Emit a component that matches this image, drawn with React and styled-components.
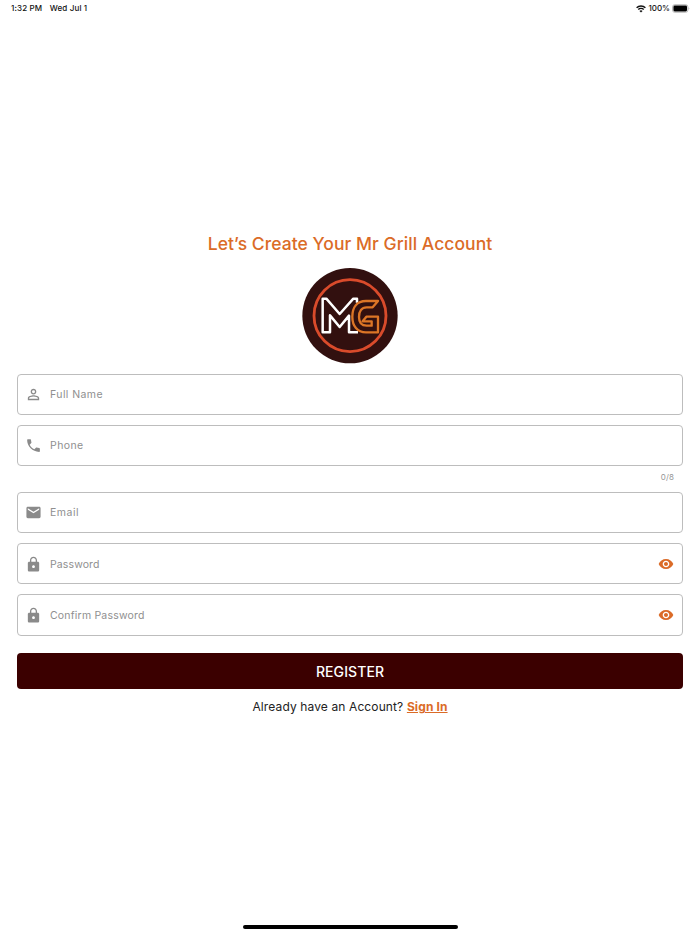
import React from 'react'
import styled, { createGlobalStyle } from 'styled-components'
import {
  MdPersonOutline,
  MdPhone,
  MdEmail,
  MdLock,
  MdVisibility,
} from 'react-icons/md'


const GlobalStyle = createGlobalStyle`
  * {
    box-sizing: border-box;
  }
  body {
    margin: 0;
    background: #fff;
    font-family: Inter, "Liberation Sans", sans-serif;
  }
`

const Screen = styled.div`
  display: flex;
  flex-direction: column;
  height: 934px;
  width: 700px;
  overflow: hidden;
`

const StatusBar = styled.header`
  display: flex;
  justify-content: space-between;
  height: 18px;
  padding: 0 10px 0 11px;
  font-size: 8px;
  font-weight: 500;
  line-height: 17px;
  color: #111;
`

const StatusGroup = styled.div`
  display: flex;
  align-items: center;
  height: 17px;
  gap: ${({ $gap }) => $gap}px;
  letter-spacing: ${({ $spacing }) => $spacing || 0}px;
`

const Content = styled.main`
  display: flex;
  flex: 1;
  flex-direction: column;
  align-items: center;
  padding: 214px 17px 0;
`

const Title = styled.h1`
  margin: 0;
  height: 24px;
  font-size: 17.5px;
  font-weight: 500;
  line-height: 24px;
  letter-spacing: 0.05px;
  white-space: nowrap;
  color: #db6b27;
`

const Logo = styled.svg`
  display: block;
  width: 96px;
  height: 96px;
  margin: 11.5px 0 10px;
`

const Form = styled.form`
  display: flex;
  flex-direction: column;
  width: 100%;
`

const Field = styled.label`
  display: flex;
  align-items: center;
  height: 41.3px;
  margin-bottom: ${({ $last }) => ($last ? 17.3 : 10)}px;
  padding: 1px 8px 0 7px;
  border: 1px solid #bdbdbd;
  border-radius: 4px;
  color: #8a8a8a;
`

const Input = styled.input`
  flex: 1;
  min-width: 0;
  margin-left: 8px;
  padding: 0;
  border: 0;
  outline: 0;
  background: transparent;
  font-family: inherit;
  font-size: 10.5px;
  letter-spacing: ${({ $spacing }) => $spacing}px;

  &::placeholder {
    color: #8f8f8f;
    opacity: 1;
  }
`

const Toggle = styled.span`
  display: flex;
  color: #db6b27;
`

const Counter = styled.div`
  height: 15.6px;
  padding-right: 9px;
  margin-top: -5px;
  margin-bottom: 5px;
  font-size: 8px;
  line-height: 12px;
  letter-spacing: 0.1px;
  text-align: right;
  color: #969696;
`

const RegisterButton = styled.button`
  height: 36.5px;
  padding: 0;
  border: 0;
  border-radius: 4px;
  background: #3b0000;
  font-family: inherit;
  font-size: 14px;
  font-weight: 500;
  letter-spacing: 0.08px;
  color: #fff;
`

const SignIn = styled.p`
  margin: 9px 0 0;
  font-size: 12px;
  line-height: 18px;
  letter-spacing: 0.12px;
  text-align: center;
  color: #222;

  a {
    color: #db6b27;
    font-weight: 700;
    text-decoration: underline;
  }
`

const HomeIndicator = styled.div`
  align-self: center;
  width: 215px;
  height: 4px;
  margin-bottom: 5.5px;
  border-radius: 2px;
  background: #000;
`

const WifiIcon = () => (
  <svg width="10" height="8" viewBox="0 0 20 16" fill="none" stroke="#111" strokeWidth="2.7">
    <path d="M1.2 5.6C6 .8 14 .8 18.8 5.6" />
    <path d="M4.5 9.1C7.5 6.2 12.5 6.2 15.5 9.1" />
    <path d="M10 15 6.9 11.8Q10 9.4 13.1 11.8Z" fill="#111" stroke="none" />
  </svg>
)

const BatteryIcon = () => (
  <svg width="18" height="9" viewBox="0 0 18 9">
    <rect x=".5" y=".7" width="15.4" height="7.6" rx="2.2" fill="#fff" stroke="#aaa" strokeWidth=".8" />
    <rect x="1.4" y="1.6" width="13.6" height="5.8" rx="1.3" fill="#000" />
    <path d="M16.7 3.2Q18 4.5 16.7 5.8Z" fill="#999" />
  </svg>
)

const GrillLogo = () => (
  <Logo viewBox="0 0 288 288" fill="none" strokeLinejoin="round">
    <circle cx="144" cy="143" r="143" fill="#32100f" />
    <circle cx="144" cy="143" r="108" stroke="#d94b2b" strokeWidth="8.5" />
    <path
      d="M165 104V92H154L113 138L73 92H62V193H84V142L113 177L141 143V193H168"
      stroke="#fff"
      strokeWidth="7.5"
    />
    <path
      d="M228 99H192C164 99 151 119 151 146C151 174 166 193 192 193H228V146H193L182 160H209V173H194C179 173 171 164 171 147C171 130 179 118 194 118H212Z"
      fill="#32100f"
      stroke="#dc7526"
      strokeWidth="7"
    />
  </Logo>
)

const TextField = ({ icon: Icon, label, spacing, secret, last }) => (
  <Field $last={last}>
    <Icon size={17} />
    <Input
      type={secret ? 'password' : 'text'}
      placeholder={label}
      $spacing={spacing}
    />
    {secret && <Toggle><MdVisibility size={16} /></Toggle>}
  </Field>
)

const App = () => (
  <Screen>
    <GlobalStyle />
    <StatusBar>
      <StatusGroup $gap={7.5} $spacing={0.14}>
        <span>1:32 PM</span>
        <span>Wed Jul 1</span>
      </StatusGroup>
      <StatusGroup $gap={2}>
        <WifiIcon />
        <span>100%</span>
        <BatteryIcon />
      </StatusGroup>
    </StatusBar>
    <Content>
      <Title>Let’s Create Your Mr Grill Account</Title>
      <GrillLogo />
      <Form>
        <TextField icon={MdPersonOutline} label="Full Name" spacing={0.42} />
        <TextField icon={MdPhone} label="Phone" spacing={0.42} />
        <Counter>0/8</Counter>
        <TextField icon={MdEmail} label="Email" spacing={0.5} />
        <TextField icon={MdLock} label="Password" spacing={0.12} secret />
        <TextField icon={MdLock} label="Confirm Password" spacing={0.2} secret last />
        <RegisterButton type="button">REGISTER</RegisterButton>
      </Form>
      <SignIn>
        Already have an Account? <a>Sign In</a>
      </SignIn>
    </Content>
    <HomeIndicator />
  </Screen>
)

export default App
